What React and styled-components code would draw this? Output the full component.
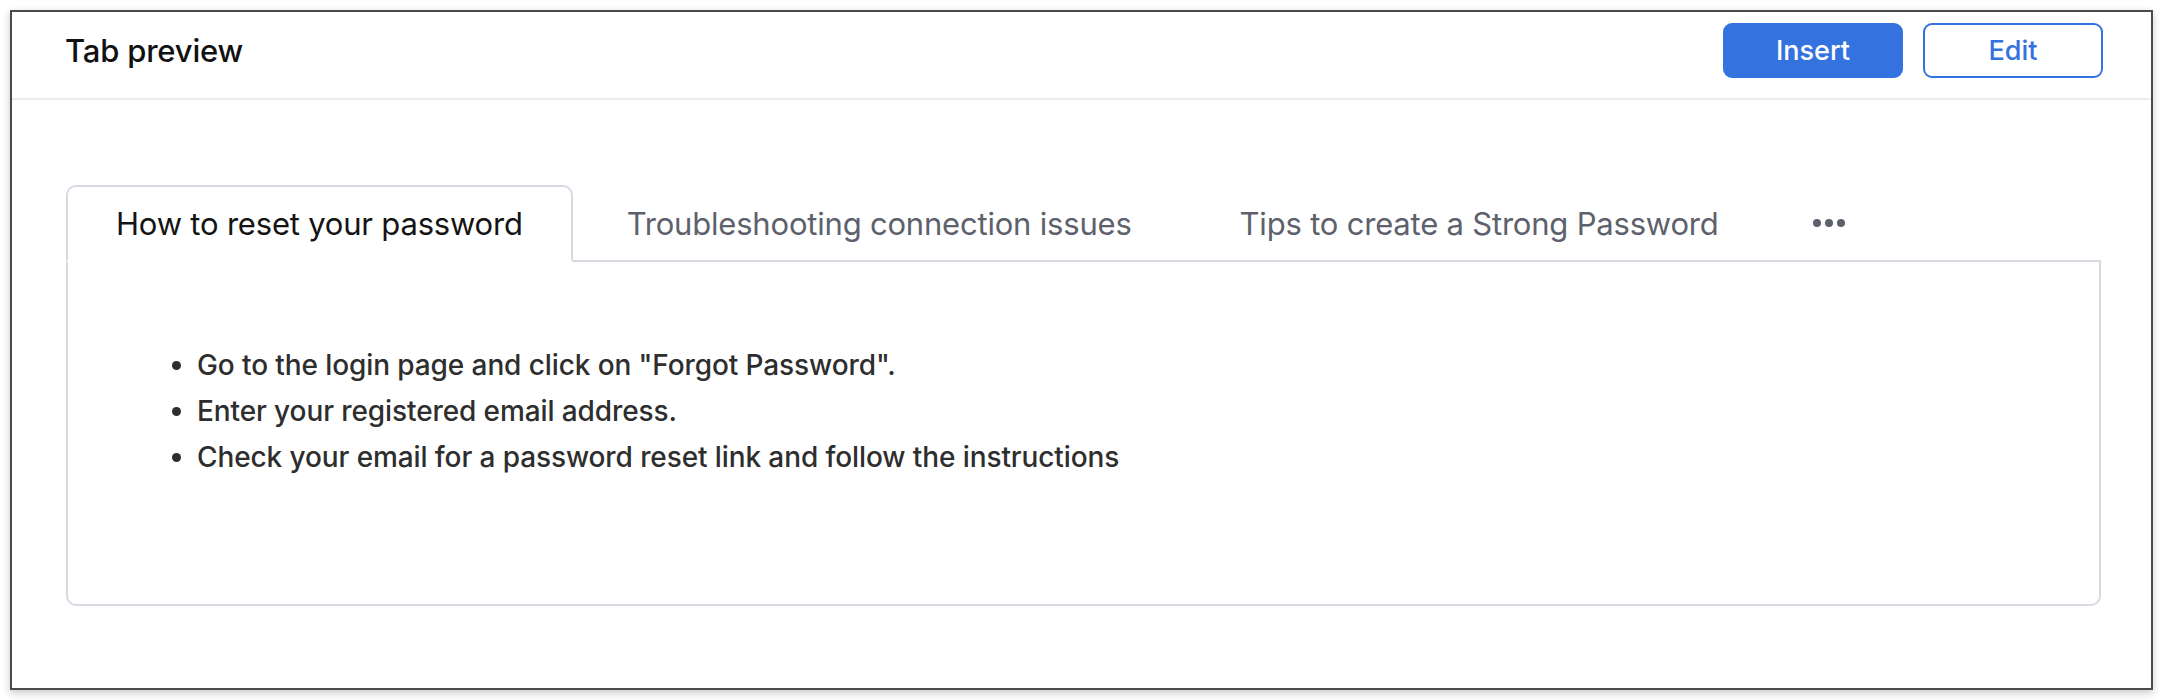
import React from "react";
import styled, { createGlobalStyle } from "styled-components";

const GlobalStyle = createGlobalStyle`
	html, body {
		margin: 0;
		padding: 0;
		background: #ffffff;
	}
	body {
		padding: 10px 13px 10px 10px;
		font-family: Inter, "Noto Sans", "Liberation Sans", sans-serif;
	}
`;

const Frame = styled.div`
	height: 680px;
	box-sizing: border-box;
	border: 2px solid #4b4b4b;
	background: #ffffff;
	box-shadow: 0 3px 8px rgba(0, 0, 0, 0.22);
	display: flex;
	flex-direction: column;
`;

const Header = styled.header`
	height: 88px;
	box-sizing: border-box;
	border-bottom: 2px solid #e9ebee;
	display: flex;
	align-items: center;
	justify-content: space-between;
	padding: 0 48px 10px 53px;
`;

const Title = styled.h1`
	margin: 0;
	font-size: 31px;
	font-weight: 500;
	color: #111111;
	letter-spacing: -0.2px;
`;

const Actions = styled.div`
	display: flex;
	gap: 20px;
`;

const Button = styled.button`
	width: 180px;
	height: 55px;
	box-sizing: border-box;
	border-radius: 9px;
	font-family: inherit;
	font-size: 27px;
	font-weight: 500;
	cursor: pointer;
	border: 2px solid #3472e0;
	background: ${(p) => (p.primary ? "#3472e0" : "#ffffff")};
	color: ${(p) => (p.primary ? "#ffffff" : "#3472e0")};
`;

const Body = styled.div`
	padding: 85px 50px 0 54px;
`;

const TabList = styled.div`
	display: flex;
	align-items: flex-end;
	border-bottom: 2px solid #d6dbe3;
`;

const Tab = styled.div`
	height: 77px;
	box-sizing: border-box;
	display: flex;
	align-items: center;
	padding: 0 ${(p) => (p.active ? "48px" : "52px")};
	margin-bottom: -2px;
	font-size: 31px;
	letter-spacing: -0.2px;
	white-space: nowrap;
	color: ${(p) => (p.active ? "#141414" : "#5d616c")};
	background: ${(p) => (p.active ? "#ffffff" : "transparent")};
	border: 2px solid ${(p) => (p.active ? "#d6dbe3" : "transparent")};
	border-bottom-color: ${(p) => (p.active ? "#ffffff" : "transparent")};
	border-radius: 10px 10px 0 0;
`;

const More = styled.div`
	height: 75px;
	display: flex;
	align-items: center;
	gap: 4px;
	padding: 0 40px;
`;

const Dot = styled.span`
	width: 8px;
	height: 8px;
	border-radius: 50%;
	background: #5d616c;
`;

const Panel = styled.div`
	height: 344px;
	box-sizing: border-box;
	border: 2px solid #d6dbe3;
	border-top: none;
	border-radius: 0 0 10px 10px;
	padding-top: 80px;
`;

const Steps = styled.ul`
	margin: 0;
	padding-left: 129px;
	list-style: disc;
`;

const Step = styled.li`
	font-size: 28px;
	font-weight: 500;
	line-height: 46px;
	color: #2e2e2e;
	letter-spacing: -0.1px;
`;

const tabs = [
	"How to reset your password",
	"Troubleshooting connection issues",
	"Tips to create a Strong Password"
];

const steps = [
	'Go to the login page and click on "Forgot Password".',
	"Enter your registered email address.",
	"Check your email for a password reset link and follow the instructions"
];

const App = () => (
	<>
		<GlobalStyle />
		<Frame>
			<Header>
				<Title>Tab preview</Title>
				<Actions>
					<Button primary>Insert</Button>
					<Button>Edit</Button>
				</Actions>
			</Header>
			<Body>
				<TabList>
					{tabs.map((t, i) => (
						<Tab key={t} active={i === 0}>
							{t}
						</Tab>
					))}
					<More>
						<Dot />
						<Dot />
						<Dot />
					</More>
				</TabList>
				<Panel>
					<Steps>
						{steps.map((s) => (
							<Step key={s}>{s}</Step>
						))}
					</Steps>
				</Panel>
			</Body>
		</Frame>
	</>
);

export default App;
